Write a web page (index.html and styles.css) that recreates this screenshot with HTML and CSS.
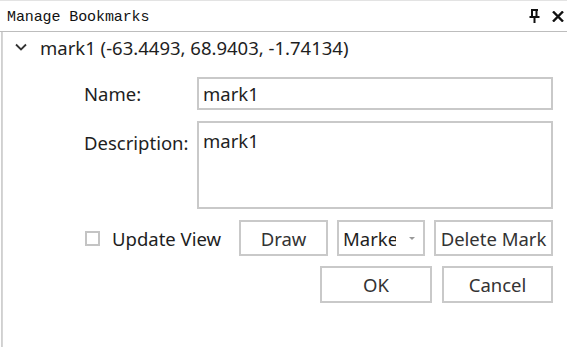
FILE: index.html
```html
<!DOCTYPE html>
<html>
<head>
  <meta charset="UTF-8">
  <title>Manage Bookmarks</title>
  <link rel="stylesheet" href="styles.css">
</head>
<body>
  <header class="titlebar">
    <span class="title">Manage Bookmarks</span>
    <div class="title-icons">
      <svg class="pin" width="11" height="14" viewBox="0 0 11 14">
        <path d="M2 1h7M3 1v7M7.5 1v7M0.5 8h10M5.5 8v6" stroke="#111" stroke-width="2" fill="none"/>
      </svg>
      <svg class="close" width="12" height="11" viewBox="0 0 12 11">
        <path d="M1 0.5l10 10M11 0.5l-10 10" stroke="#111" stroke-width="2.4" fill="none"/>
      </svg>
    </div>
  </header>

  <div class="panel">
    <div class="tree-row">
      <svg class="chevron" width="12" height="8" viewBox="0 0 12 8">
        <path d="M1 1.5l5 5 5-5" stroke="#333" stroke-width="1.8" fill="none"/>
      </svg>
      <span>mark1 (-63.4493, 68.9403, -1.74134)</span>
    </div>

    <div class="form">
      <label class="label">Name:</label>
      <div class="field input">mark1</div>
      <label class="label label-desc">Description:</label>
      <div class="field textarea">mark1</div>
    </div>

    <div class="actions">
      <label class="check"><span class="box"></span>Update View</label>
      <button class="btn draw">Draw</button>
      <div class="btn combo"><span class="combo-text">Marker</span><span class="caret"></span></div>
      <button class="btn delete">Delete Mark</button>
    </div>

    <div class="footer">
      <button class="btn ok">OK</button>
      <button class="btn cancel">Cancel</button>
    </div>
  </div>
</body>
</html>
```

FILE: styles.css
```css
body {
  margin: 0;
  width: 567px;
  height: 347px;
  overflow: hidden;
  background-color: white;
  color: #1e1e1e;
  font-family: "Noto Sans", "Open Sans", sans-serif;
  font-size: 18.5px;
}

.titlebar {
  height: 30px;
  display: flex;
  justify-content: space-between;
  align-items: center;
  border-top: 1px solid #e3e3e3;
  border-bottom: 1px solid #bdbdbd;
  padding: 0 3px 0 7px;
}

.title {
  font-family: "Liberation Mono", monospace;
  font-size: 15px;
  letter-spacing: -0.1px;
  color: #111;
  margin-top: 2px;
}

.title-icons {
  display: flex;
  align-items: center;
  gap: 12px;
}

.panel {
  height: 316px;
  border-left: 1px solid #d0d0d0;
  margin-left: 1px;
  padding-left: 2px;
  box-shadow: inset 1px 0 0 #d6d6d6;
}

.tree-row {
  height: 30px;
  display: flex;
  align-items: center;
  color: #1e1e1e;
}

.chevron {
  margin-left: 11px;
  margin-right: 13px;
}

.form {
  display: grid;
  grid-template-columns: 113px 356px;
  row-gap: 11px;
  margin-top: 15px;
  padding-left: 80px;
}

.label {
  padding-top: 4px;
}

.label-desc {
  padding-top: 9px;
}

.field {
  border: 2px solid #c9c9c9;
  box-sizing: border-box;
  padding: 3px 4px;
}

.input {
  height: 33px;
  line-height: 24px;
}

.textarea {
  height: 88px;
  padding-top: 5px;
}

.actions {
  display: flex;
  align-items: center;
  margin-top: 11px;
  padding-left: 81px;
}

.check {
  display: flex;
  align-items: center;
  width: 154px;
}

.box {
  width: 15px;
  height: 15px;
  box-sizing: border-box;
  border: 2px solid #c4c4c4;
  margin-right: 12px;
}

.btn {
  font-family: inherit;
  font-size: 18.5px;
  color: #333;
  background: white;
  border: 2px solid #c9c9c9;
  box-sizing: border-box;
  height: 36px;
  padding: 0;
  margin: 0;
}

.draw {
  width: 89px;
}

.combo {
  width: 88px;
  margin-left: 9px;
  display: flex;
  align-items: center;
  padding-left: 4px;
  color: #1e1e1e;
}

.combo-text {
  width: 53px;
  overflow: hidden;
  white-space: nowrap;
}

.caret {
  width: 0;
  height: 0;
  border-left: 3px solid transparent;
  border-right: 3px solid transparent;
  border-top: 3px solid #999;
  margin-left: 13px;
}

.delete {
  width: 119px;
  margin-left: 9px;
}

.footer {
  display: flex;
  justify-content: flex-end;
  gap: 10px;
  margin-top: 10px;
  padding-right: 14px;
}

.ok {
  width: 112px;
  height: 37px;
}

.cancel {
  width: 111px;
  height: 37px;
}
```
